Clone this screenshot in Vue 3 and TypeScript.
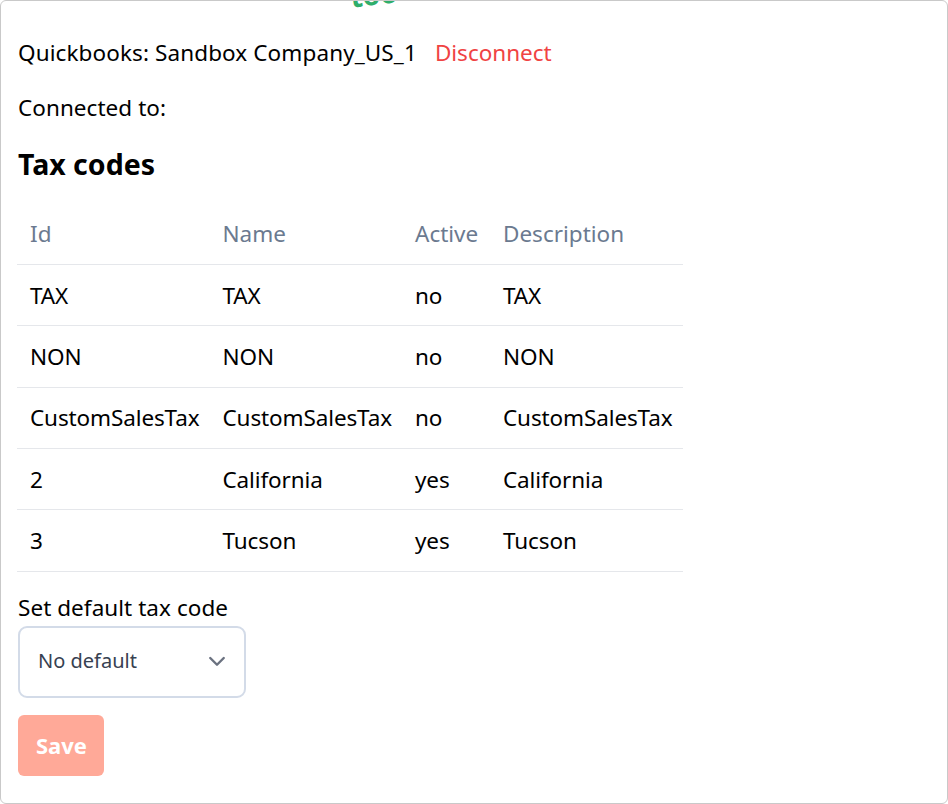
<script setup lang="ts">
interface TaxCode {
  id: string
  name: string
  active: string
  description: string
}

const taxCodes: TaxCode[] = [
  { id: 'TAX', name: 'TAX', active: 'no', description: 'TAX' },
  { id: 'NON', name: 'NON', active: 'no', description: 'NON' },
  { id: 'CustomSalesTax', name: 'CustomSalesTax', active: 'no', description: 'CustomSalesTax' },
  { id: '2', name: 'California', active: 'yes', description: 'California' },
  { id: '3', name: 'Tucson', active: 'yes', description: 'Tucson' }
]
</script>

<template>
  <div class="frame">
    <span class="clipped">too</span>
    <div class="connection">
      <span class="company">Quickbooks: Sandbox Company_US_1</span>
      <a class="disconnect">Disconnect</a>
    </div>
    <p class="connected">Connected to:</p>
    <h2 class="title">Tax codes</h2>
    <table class="codes">
      <thead>
        <tr>
          <th class="col-id">Id</th>
          <th class="col-name">Name</th>
          <th class="col-active">Active</th>
          <th>Description</th>
        </tr>
      </thead>
      <tbody>
        <tr v-for="code in taxCodes" :key="code.id">
          <td>{{ code.id }}</td>
          <td>{{ code.name }}</td>
          <td>{{ code.active }}</td>
          <td>{{ code.description }}</td>
        </tr>
      </tbody>
    </table>
    <label class="field-label">Set default tax code</label>
    <div class="select">
      <span>No default</span>
      <svg class="chevron" viewBox="0 0 20 20" fill="none">
        <path d="M5.5 8l4.500 4.500L14.500 8" stroke="#6b7280" stroke-width="1.6" stroke-linecap="round" stroke-linejoin="round" />
      </svg>
    </div>
    <button class="save" disabled>Save</button>
  </div>
</template>

<style>
html,
body {
  margin: 0;
  background: #fff;
}
</style>

<style scoped>
.frame {
  position: relative;
  box-sizing: border-box;
  width: 948px;
  height: 804px;
  padding: 35px 18px 0;
  overflow: hidden;
  background: #fff;
  border: 1px solid #c9c9c9;
  border-radius: 6px;
  font-family: "Noto Sans", sans-serif;
  font-size: 22.5px;
  line-height: 33px;
  color: #000;
}

/* tail of a toast scrolled out of the top of the window */
.clipped {
  position: absolute;
  top: -25px;
  left: 349px;
  font-size: 28px;
  line-height: 36px;
  font-weight: 700;
  color: #2fae6b;
  transform: rotate(-7deg);
}

.connection {
  display: flex;
  gap: 18px;
  margin-left: -1px;
}

.company {
  letter-spacing: 0.1px;
}

.disconnect {
  color: #f04343;
}

.connected {
  margin: 22px 0 0 -1px;
  letter-spacing: 0.05px;
}

.title {
  margin: 22px 0 0 -1px;
  font-size: 28.5px;
  line-height: 36px;
  font-weight: 700;
}

.codes {
  margin: 21px 0 0 -2px;
  border-collapse: collapse;
  table-layout: fixed;
  width: 666px;
}

.codes th {
  font-weight: 400;
  text-align: left;
  color: #6b7a90;
}

.codes th,
.codes td {
  box-sizing: border-box;
  height: 61.4px;
  padding: 0 12px;
  border-bottom: 1.5px solid #e5e7eb;
  white-space: nowrap;
}

.codes th:first-child,
.codes td:first-child {
  padding-left: 13px;
}

.codes td {
  letter-spacing: -0.12px;
}

.col-id {
  width: 193.5px;
}

.col-name {
  width: 192.5px;
}

.col-active {
  width: 88px;
}

.field-label {
  display: block;
  margin: 19px 0 0 -1px;
  letter-spacing: 0.05px;
}

.select {
  box-sizing: border-box;
  display: flex;
  align-items: center;
  justify-content: space-between;
  width: 228px;
  height: 72px;
  margin: 2px 0 0 -1px;
  padding: 0 12px 2px 18px;
  border: 2px solid #d3dbe8;
  border-radius: 9px;
  font-size: 20px;
  color: #374151;
}

.chevron {
  width: 30px;
  height: 30px;
}

.save {
  display: block;
  width: 86px;
  height: 61px;
  margin: 17px 0 0 -1px;
  padding: 0 0 0 1px;
  border: 0;
  border-radius: 6px;
  background: #ffa998;
  color: #fff;
  font-family: inherit;
  font-size: 22px;
  font-weight: 700;
}
</style>
